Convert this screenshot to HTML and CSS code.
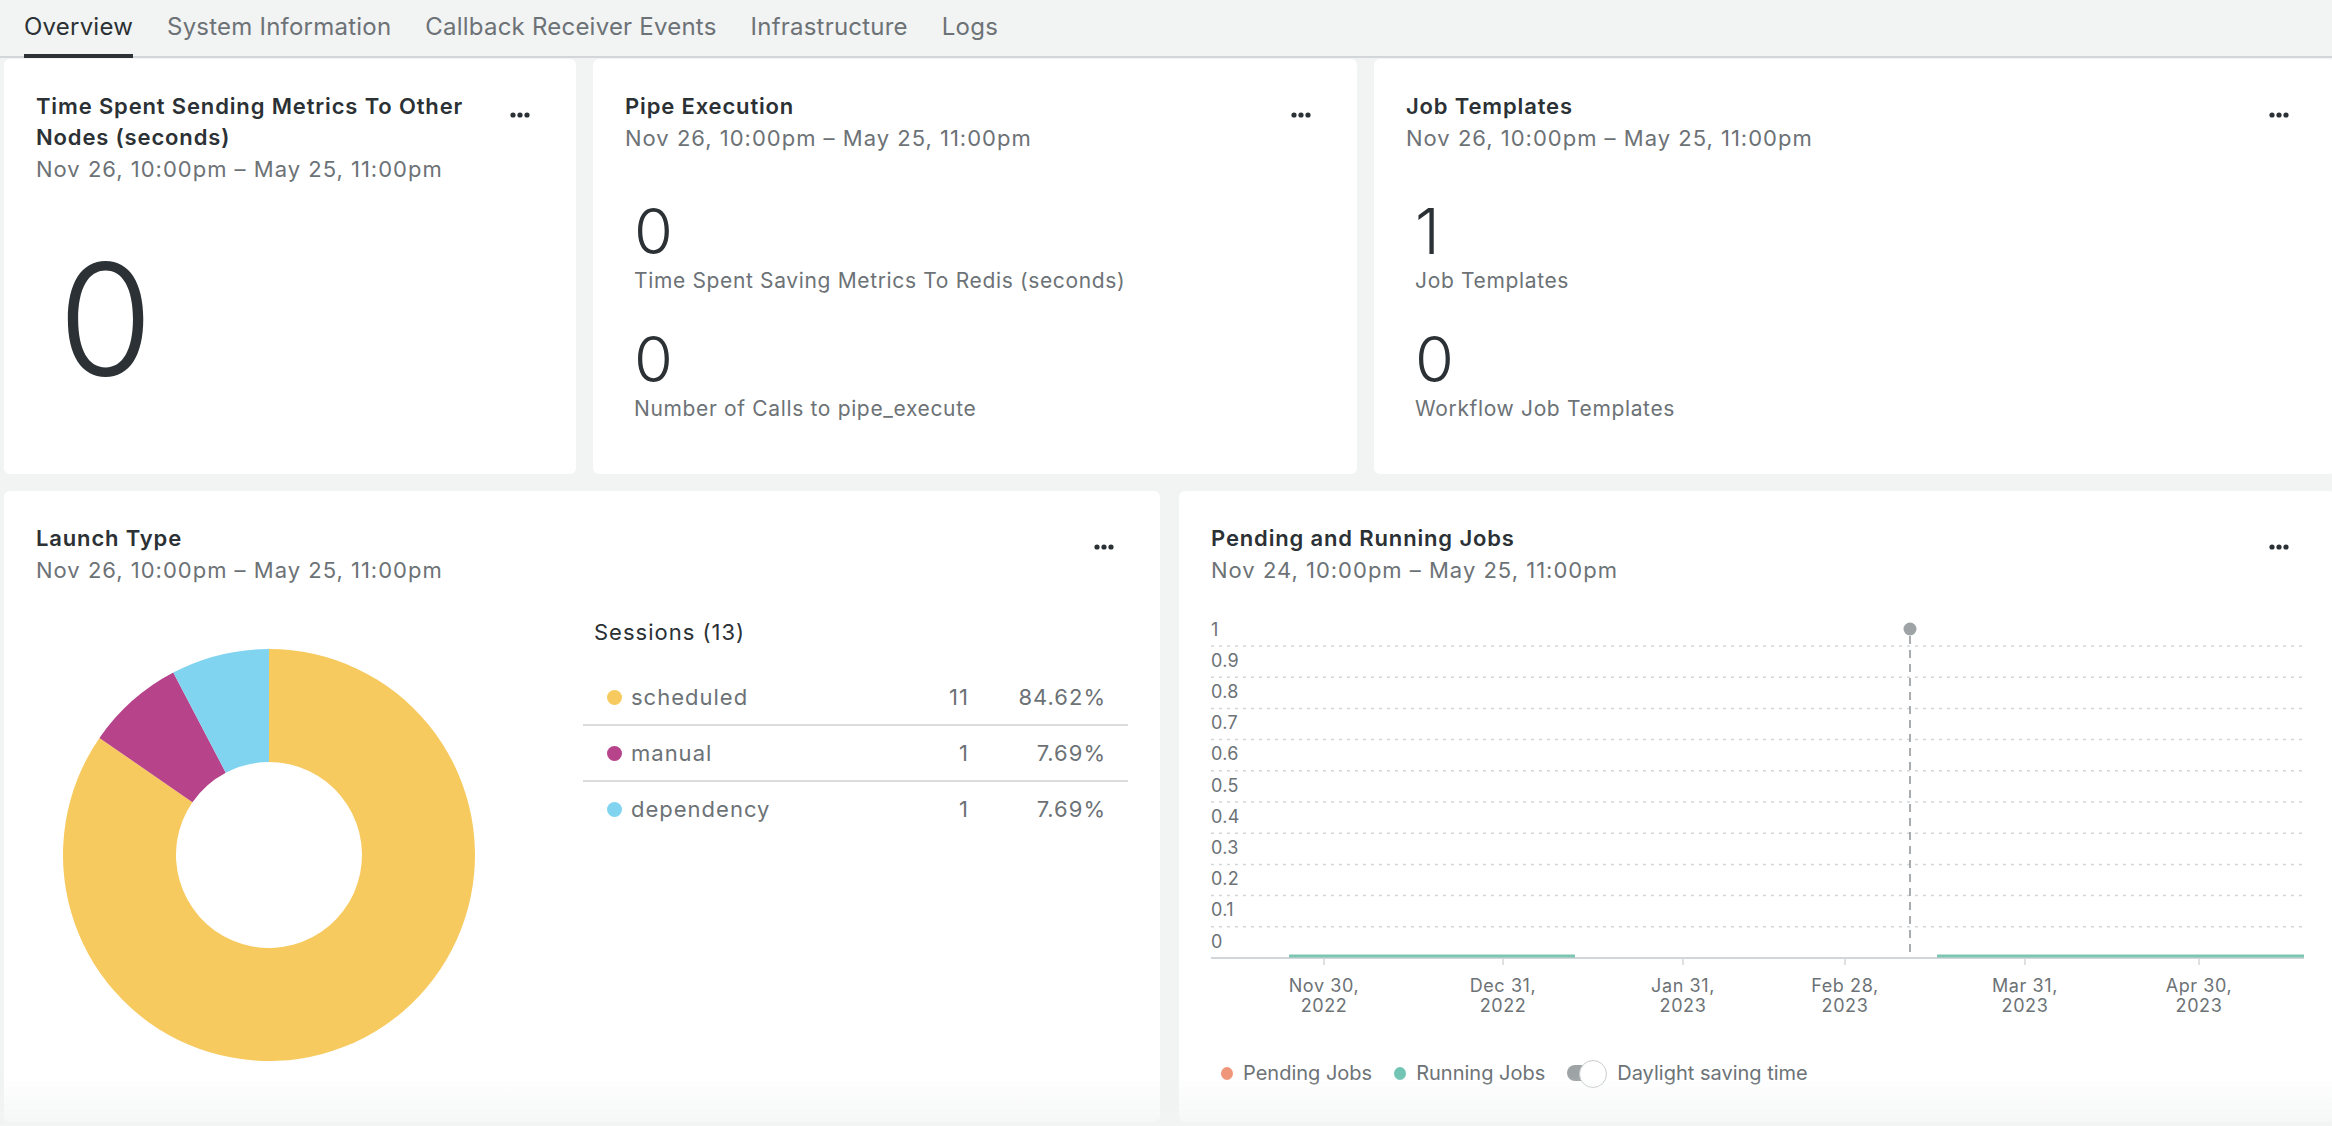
FILE: index.html
```html
<!DOCTYPE html>
<html lang="en">
<head>
<meta charset="utf-8">
<title>Overview</title>
<link rel="stylesheet" href="styles.css">
</head>
<body>
<nav class="tabs">
  <a class="tab active">Overview</a>
  <a class="tab">System Information</a>
  <a class="tab">Callback Receiver Events</a>
  <a class="tab">Infrastructure</a>
  <a class="tab">Logs</a>
</nav>
<main class="dash">
  <section class="row row-top">
    <article class="card">
      <header class="card-head">
        <div class="head-text">
          <h2 class="card-title">Time Spent Sending Metrics To Other Nodes (seconds)</h2>
          <div class="card-date">Nov 26, 10:00pm – May 25, 11:00pm</div>
        </div>
        <svg class="menu" width="20" height="6" viewBox="0 0 20 6"><circle cx="3" cy="3" r="2.6"/><circle cx="10" cy="3" r="2.6"/><circle cx="17" cy="3" r="2.6"/></svg>
      </header>
      <div class="big-num">0</div>
    </article>
    <article class="card">
      <header class="card-head">
        <div class="head-text">
          <h2 class="card-title">Pipe Execution</h2>
          <div class="card-date">Nov 26, 10:00pm – May 25, 11:00pm</div>
        </div>
        <svg class="menu" width="20" height="6" viewBox="0 0 20 6"><circle cx="3" cy="3" r="2.6"/><circle cx="10" cy="3" r="2.6"/><circle cx="17" cy="3" r="2.6"/></svg>
      </header>
      <div class="stats">
        <div class="stat"><div class="stat-num">0</div><div class="stat-label">Time Spent Saving Metrics To Redis (seconds)</div></div>
        <div class="stat"><div class="stat-num">0</div><div class="stat-label">Number of Calls to pipe_execute</div></div>
      </div>
    </article>
    <article class="card">
      <header class="card-head">
        <div class="head-text">
          <h2 class="card-title">Job Templates</h2>
          <div class="card-date">Nov 26, 10:00pm – May 25, 11:00pm</div>
        </div>
        <svg class="menu" width="20" height="6" viewBox="0 0 20 6"><circle cx="3" cy="3" r="2.6"/><circle cx="10" cy="3" r="2.6"/><circle cx="17" cy="3" r="2.6"/></svg>
      </header>
      <div class="stats">
        <div class="stat"><div class="stat-num">1</div><div class="stat-label">Job Templates</div></div>
        <div class="stat"><div class="stat-num">0</div><div class="stat-label">Workflow Job Templates</div></div>
      </div>
    </article>
  </section>

  <section class="row row-bottom">
    <article class="card card-tall">
      <header class="card-head">
        <div class="head-text">
          <h2 class="card-title">Launch Type</h2>
          <div class="card-date">Nov 26, 10:00pm – May 25, 11:00pm</div>
        </div>
        <svg class="menu" width="20" height="6" viewBox="0 0 20 6"><circle cx="3" cy="3" r="2.6"/><circle cx="10" cy="3" r="2.6"/><circle cx="17" cy="3" r="2.6"/></svg>
      </header>
      <div class="launch-body">
        <div class="donut-wrap">
          <svg class="donut" width="414" height="414" viewBox="0 0 414 414">
            <path fill="#f7ca5f" d="M207 1 A206 206 0 1 1 37.46 89.97 L130.46 154.17 A93 93 0 1 0 207 114 Z"/>
            <path fill="#b7438b" d="M37.46 89.97 A206 206 0 0 1 111.27 24.59 L163.78 124.65 A93 93 0 0 0 130.46 154.17 Z"/>
            <path fill="#80d4ef" d="M111.27 24.59 A206 206 0 0 1 207 1 L207 114 A93 93 0 0 0 163.78 124.65 Z"/>
          </svg>
        </div>
        <div class="sessions">
          <div class="sessions-head">Sessions (13)</div>
          <div class="srow"><span class="sdot dot-yellow"></span><span class="sname">scheduled</span><span class="scount">11</span><span class="spct">84.62%</span></div>
          <div class="srow"><span class="sdot dot-magenta"></span><span class="sname">manual</span><span class="scount">1</span><span class="spct">7.69%</span></div>
          <div class="srow"><span class="sdot dot-cyan"></span><span class="sname">dependency</span><span class="scount">1</span><span class="spct">7.69%</span></div>
        </div>
      </div>
    </article>
    <article class="card card-tall">
      <header class="card-head">
        <div class="head-text">
          <h2 class="card-title">Pending and Running Jobs</h2>
          <div class="card-date">Nov 24, 10:00pm – May 25, 11:00pm</div>
        </div>
        <svg class="menu" width="20" height="6" viewBox="0 0 20 6"><circle cx="3" cy="3" r="2.6"/><circle cx="10" cy="3" r="2.6"/><circle cx="17" cy="3" r="2.6"/></svg>
      </header>
      <svg class="chart" width="1093" height="410" viewBox="0 0 1093 410">
        <g class="grid">
          <line x1="0" x2="1093" y1="32" y2="32"/>
          <line x1="0" x2="1093" y1="63.2" y2="63.2"/>
          <line x1="0" x2="1093" y1="94.4" y2="94.4"/>
          <line x1="0" x2="1093" y1="125.6" y2="125.6"/>
          <line x1="0" x2="1093" y1="156.8" y2="156.8"/>
          <line x1="0" x2="1093" y1="188" y2="188"/>
          <line x1="0" x2="1093" y1="219.2" y2="219.2"/>
          <line x1="0" x2="1093" y1="250.4" y2="250.4"/>
          <line x1="0" x2="1093" y1="281.6" y2="281.6"/>
          <line x1="0" x2="1093" y1="312.8" y2="312.8"/>
        </g>
        <g class="ylabels">
          <text x="0" y="21.5">1</text>
          <text x="0" y="52.7">0.9</text>
          <text x="0" y="83.9">0.8</text>
          <text x="0" y="115.1">0.7</text>
          <text x="0" y="146.3">0.6</text>
          <text x="0" y="177.5">0.5</text>
          <text x="0" y="208.7">0.4</text>
          <text x="0" y="239.9">0.3</text>
          <text x="0" y="271.1">0.2</text>
          <text x="0" y="302.3">0.1</text>
          <text x="0" y="333.5">0</text>
        </g>
        <line class="axis" x1="0" x2="1093" y1="344" y2="344"/>
        <g class="ticks">
          <line x1="113" x2="113" y1="345" y2="351"/>
          <line x1="292" x2="292" y1="345" y2="351"/>
          <line x1="472" x2="472" y1="345" y2="351"/>
          <line x1="634" x2="634" y1="345" y2="351"/>
          <line x1="814" x2="814" y1="345" y2="351"/>
          <line x1="988" x2="988" y1="345" y2="351"/>
        </g>
        <line class="marker" x1="699" x2="699" y1="22" y2="344"/>
        <circle class="marker-dot" cx="699" cy="15" r="6.5"/>
        <line class="running" x1="78" x2="364" y1="342" y2="342"/>
        <line class="running" x1="726" x2="1093" y1="342" y2="342"/>
        <g class="xlabels">
          <text x="113" y="378">Nov 30,</text><text x="113" y="398">2022</text>
          <text x="292" y="378">Dec 31,</text><text x="292" y="398">2022</text>
          <text x="472" y="378">Jan 31,</text><text x="472" y="398">2023</text>
          <text x="634" y="378">Feb 28,</text><text x="634" y="398">2023</text>
          <text x="814" y="378">Mar 31,</text><text x="814" y="398">2023</text>
          <text x="988" y="378">Apr 30,</text><text x="988" y="398">2023</text>
        </g>
      </svg>
      <div class="legend">
        <span class="litem"><span class="ldot dot-pending"></span>Pending Jobs</span>
        <span class="litem"><span class="ldot dot-running"></span>Running Jobs</span>
        <span class="litem"><span class="toggle"></span>Daylight saving time</span>
      </div>
    </article>
  </section>
</main>
<div class="fade"></div>
</body>
</html>
```

FILE: styles.css
```css
* { box-sizing: border-box; }

html, body {
  margin: 0;
  padding: 0;
}

body {
  background: #f2f3f3;
  font-family: Inter, "Noto Sans", "Liberation Sans", sans-serif;
  color: #2b3134;
  width: 2332px;
  height: 1126px;
  overflow: hidden;
}

.tabs {
  display: flex;
  align-items: flex-end;
  gap: 34px;
  height: 58px;
  padding: 0 24px;
  border-bottom: 2px solid #d3d6d8;
}

.tab {
  position: relative;
  font-size: 24px;
  line-height: 24px;
  letter-spacing: 0.22px;
  color: #6c7276;
  padding-bottom: 17px;
  cursor: pointer;
}

.tab.active {
  color: #2b3134;
}

.tab.active::after {
  content: "";
  position: absolute;
  left: 0;
  right: 0;
  bottom: -2px;
  height: 4px;
  background: #2b3134;
}

.dash {
  width: 2335px;
  padding: 1px 0 0 4px;
}

.row {
  display: grid;
  gap: 17px;
}

.row-top {
  grid-template-columns: 572px 764px 961px;
  height: 415px;
}

.row-bottom {
  grid-template-columns: 1156px 1156px;
  gap: 19px;
  margin-top: 17px;
  height: 631px;
}

.card {
  background: #ffffff;
  border-radius: 6px;
  padding: 32px;
  min-width: 0;
}

.card-head {
  display: flex;
  justify-content: space-between;
  align-items: flex-start;
}

.head-text {
  min-width: 0;
}

.card-title {
  margin: 0;
  font-size: 22px;
  line-height: 31px;
  font-weight: 600;
  letter-spacing: 0.85px;
  color: #2b3134;
}

.card-date {
  font-size: 22px;
  line-height: 33px;
  letter-spacing: 1px;
  color: #6c7276;
}

.menu {
  flex: none;
  fill: #2b3134;
  margin-top: 21px;
  margin-right: 14px;
  margin-left: 20px;
}

.big-num {
  font-size: 154px;
  line-height: 154px;
  font-weight: 300;
  color: #2b3134;
  margin: 56px 0 0 22px;
}

.stats {
  margin: 41px 0 0 9px;
}

.stat + .stat {
  margin-top: 28px;
}

.stat-num {
  font-size: 63px;
  line-height: 70px;
  font-weight: 300;
  color: #2b3134;
}

.stat-label {
  font-size: 21px;
  line-height: 30px;
  letter-spacing: 0.65px;
  color: #6c7276;
}

/* Launch type */
.launch-body {
  display: flex;
}

.donut-wrap {
  width: 547px;
  flex: none;
  padding: 61px 0 0 26px;
}

.donut {
  display: block;
}

.sessions {
  width: 550px;
  padding-top: 30px;
}

.sessions-head {
  font-size: 22px;
  line-height: 30px;
  letter-spacing: 1px;
  color: #2b3134;
  padding-left: 11px;
  margin-bottom: 23px;
}

.srow {
  display: flex;
  align-items: center;
  height: 56px;
  padding: 0 22px 0 24px;
  border-bottom: 2px solid #dcdcdc;
  font-size: 22px;
  letter-spacing: 1px;
  color: #6c7276;
}

.srow:last-child {
  border-bottom: none;
  height: 54px;
}

.sdot {
  width: 15px;
  height: 15px;
  border-radius: 50%;
  margin-right: 9px;
  flex: none;
}

.dot-yellow { background: #f7ca5f; }
.dot-magenta { background: #b7438b; }
.dot-cyan { background: #80d4ef; }

.sname {
  flex: 1;
}

.scount {
  text-align: right;
}

.spct {
  width: 137px;
  text-align: right;
}

/* Chart */
.chart {
  display: block;
  margin-top: 27px;
  overflow: visible;
}

.grid line {
  stroke: #d3d6d8;
  stroke-width: 1.5;
  stroke-dasharray: 3 5;
}

.ylabels text {
  font-size: 18px;
  letter-spacing: 0.3px;
  fill: #6c7276;
}

.axis {
  stroke: #d3d6d8;
  stroke-width: 2;
}

.ticks line {
  stroke: #d3d6d8;
  stroke-width: 1.5;
}

.marker {
  stroke: #8d9395;
  stroke-width: 1.5;
  stroke-dasharray: 8 6;
}

.marker-dot {
  fill: #9ea4a5;
}

.running {
  stroke: #7cc6b2;
  stroke-width: 3;
}

.xlabels text {
  font-size: 18px;
  letter-spacing: 0.6px;
  fill: #6c7276;
  text-anchor: middle;
}

.legend {
  display: flex;
  align-items: center;
  gap: 22px;
  margin-top: 35px;
  padding-left: 10px;
  font-size: 20px;
  line-height: 28px;
  color: #6c7276;
}

.litem {
  display: flex;
  align-items: center;
}

.ldot {
  width: 12px;
  height: 13px;
  border-radius: 50%;
  margin-right: 10px;
}

.dot-pending { background: #f0967a; }
.dot-running { background: #72c5b4; }

.toggle {
  position: relative;
  width: 40px;
  height: 26px;
  margin-right: 10px;
}

.toggle::before {
  content: "";
  position: absolute;
  left: 0;
  top: 5px;
  width: 36px;
  height: 16px;
  border-radius: 8px;
  background: #9ea4a5;
}

.toggle::after {
  content: "";
  position: absolute;
  right: 0;
  top: 0;
  width: 26px;
  height: 26px;
  border-radius: 50%;
  background: #ffffff;
  border: 1.5px solid #c9cccd;
}

.fade {
  position: fixed;
  left: 0;
  right: 0;
  bottom: 0;
  height: 50px;
  background: linear-gradient(to bottom, rgba(242, 243, 243, 0), rgba(242, 243, 243, 0.75));
  pointer-events: none;
}
```
